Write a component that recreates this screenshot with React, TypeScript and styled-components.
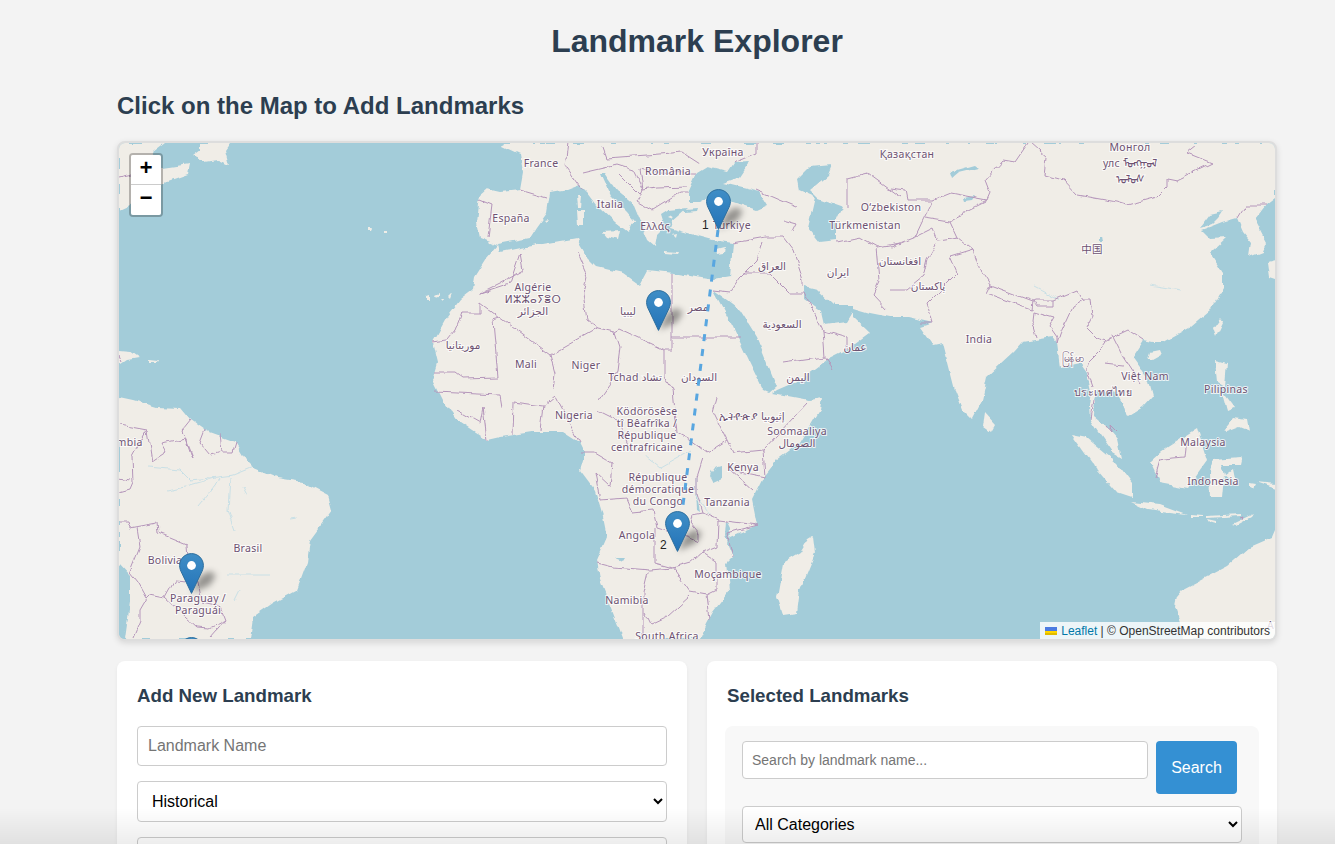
import styled, { createGlobalStyle } from 'styled-components';

const GlobalStyle = createGlobalStyle`
  html, body {
    margin: 0;
    height: 100%;
    overflow: hidden;
    background: #f3f3f3;
    font-family: "Liberation Sans", Arial, sans-serif;
  }
  * { box-sizing: border-box; }
`;

const Page = styled.div`
  width: 1160px;
  margin-left: 117px;
  padding-top: 21px;
`;

const Title = styled.h1`
  margin: 0 0 31px;
  font-size: 32px;
  line-height: 40px;
  font-weight: 700;
  text-align: center;
  color: #2c3e50;
`;

const SubTitle = styled.h2`
  margin: 0 0 21px;
  font-size: 24px;
  line-height: 28px;
  font-weight: 700;
  color: #2c3e50;
`;

const MapFrame = styled.div`
  position: relative;
  height: 500px;
  border: 2px solid #ddd;
  border-radius: 8px;
  overflow: hidden;
  background: #a3ccd9;
  box-shadow: 0 2px 6px rgba(0, 0, 0, 0.12);
`;

const MapSvg = styled.svg`
  display: block;
  width: 100%;
  height: 100%;
`;

const Land = styled.path`
  fill: #f0ede7;
`;

const Water = styled.path`
  fill: #a3ccd9;
`;

const Border = styled.path`
  fill: none;
  stroke: #b596bb;
  stroke-width: 1;
  stroke-linejoin: round;
`;

const River = styled.path`
  fill: none;
  stroke: #c9e0e6;
  stroke-width: 1;
  stroke-linejoin: round;
`;

const Route = styled.path`
  fill: none;
  stroke: #58a6e0;
  stroke-width: 3;
  stroke-dasharray: 7 8;
`;

const Label = styled.text`
  font-family: "Noto Sans", "DejaVu Sans", "Noto Sans CJK SC", sans-serif;
  font-size: 10.5px;
  letter-spacing: 0.3px;
  fill: #6d5272;
  text-anchor: middle;
  stroke: rgba(255, 255, 255, 0.75);
  stroke-width: 2px;
  paint-order: stroke;
`;

const ZoomControl = styled.div`
  position: absolute;
  left: 10px;
  top: 10px;
  border: 2px solid rgba(0, 0, 0, 0.25);
  border-radius: 4px;
  background-clip: padding-box;
`;

const ZoomButton = styled.a<{ $first?: boolean }>`
  display: block;
  width: 30px;
  height: 30px;
  background: #fff;
  color: #000;
  font: 700 22px/30px "Liberation Mono", "DejaVu Sans Mono", monospace;
  text-align: center;
  border-bottom: ${p => (p.$first ? '1px solid #ccc' : 'none')};
  border-radius: ${p => (p.$first ? '2px 2px 0 0' : '0 0 2px 2px')};
`;

const Attribution = styled.div`
  position: absolute;
  right: 0;
  bottom: 0;
  display: flex;
  align-items: center;
  height: 17px;
  padding: 0 5px;
  background: rgba(255, 255, 255, 0.8);
  font-size: 12px;
  color: #333;
  white-space: pre;
`;

const AttributionLink = styled.a`
  color: #0078a8;
`;

const Flag = styled.svg`
  width: 12px;
  height: 8px;
  margin-right: 4px;
`;

const Pin = styled.svg<{ $tipX: number; $tipY: number }>`
  position: absolute;
  left: ${p => p.$tipX - 119 - 12.5}px;
  top: ${p => p.$tipY - 143 - 41}px;
  width: 50px;
  height: 41px;
  overflow: visible;
`;

const PinNumber = styled.span<{ $x: number; $y: number }>`
  position: absolute;
  left: ${p => p.$x - 119}px;
  top: ${p => p.$y - 143}px;
  font-size: 12px;
  line-height: 14px;
  color: #222;
`;

const Columns = styled.div`
  display: grid;
  grid-template-columns: minmax(0, 1fr) minmax(0, 1fr);
  gap: 20px;
  margin-top: 20px;
`;

const Card = styled.section`
  background: #fff;
  border-radius: 8px;
  padding: 20px;
  box-shadow: 0 2px 4px rgba(0, 0, 0, 0.05);
  height: 400px;
`;

const CardTitle = styled.h3`
  margin: 4px 0 20px;
  font-size: 18.72px;
  line-height: 21px;
  font-weight: 700;
  color: #2c3e50;
`;

const Field = styled.input`
  display: block;
  width: 100%;
  height: 40px;
  margin-bottom: 15px;
  padding: 0 10px;
  border: 1px solid #ccc;
  border-radius: 4px;
  background: #fff;
  font: 16px "Liberation Sans", Arial, sans-serif;
  &::placeholder { color: #757575; }
`;

const Dropdown = styled.select<{ $height: number; $padding: number }>`
  display: block;
  width: 100%;
  height: ${p => p.$height}px;
  margin-bottom: 15px;
  padding: 0 ${p => p.$padding}px;
  border: 1px solid #ccc;
  border-radius: 4px;
  background: #fff;
  color: #000;
  font: 16px "Liberation Sans", Arial, sans-serif;
`;

const FilterPanel = styled.div`
  width: 534px;
  margin-left: -2px;
  padding: 15px 17px;
  background: #f8f8f8;
  border-radius: 8px;
`;

const SearchRow = styled.div`
  display: flex;
  align-items: flex-start;
  gap: 8px;
  margin-bottom: 12px;
`;

const SearchInput = styled.input`
  width: 406px;
  height: 38px;
  padding: 0 9px;
  border: 1px solid #ccc;
  border-radius: 4px;
  background: #fff;
  font: 14px "Liberation Sans", Arial, sans-serif;
  &::placeholder { color: #757575; }
`;

const SearchButton = styled.button`
  width: 81px;
  height: 53px;
  border: none;
  border-radius: 4px;
  background: #3490d3;
  color: #fff;
  font: 16px "Liberation Sans", Arial, sans-serif;
`;

const BottomFade = styled.div`
  position: fixed;
  left: 0;
  right: 0;
  bottom: 0;
  height: 36px;
  background: linear-gradient(to bottom, rgba(0, 0, 0, 0), rgba(0, 0, 0, 0.07));
  pointer-events: none;
`;

const lands = [
  // Eurasia and Africa
  'M505 143L1276 143L1276 198L1267 205L1255 220L1267 243L1263 252L1250 257L1252 243L1243 232L1237 218L1223 222L1213 226L1202 230L1210 238L1227 237L1210 253L1223 273L1223 287L1210 310L1190 327L1163 342L1153 342L1143 340L1132 357L1147 378L1152 397L1143 407L1127 417L1123 403L1117 393L1097 390L1094 400L1093 415L1105 425L1118 440L1122 458L1112 452L1100 435L1090 420L1089 405L1091 392L1087 373L1080 363L1060 367L1057 343L1053 337L1023 342L1013 353L987 377L982 400L972 419L963 410L955 390L943 343L933 345L920 327L933 323L907 317L890 317L870 313L853 308L853 317L870 333L847 350L827 360L800 380L777 390L773 393L810 400L822 398L820 410L800 443L777 460L763 478L752 500L757 525L730 537L727 543L733 557L727 563L730 590L713 612L707 623L700 639L623 639L613 613L600 580L597 560L607 537L603 517L595 490L580 470L585 453L580 443L563 432L533 432L500 437L487 440L457 420L443 400L433 380L438 363L433 342L447 317L460 300L473 290L475 277L487 258L498 245L480 238L477 223L480 195L487 189L500 192L520 190L523 173L520 155L503 147Z',
  // South America
  'M119 397L133 400L157 407L180 408L190 420L207 432L235 442L247 462L253 468L277 478L303 482L328 495L332 510L310 540L307 563L297 590L273 603L253 617L250 639L125 639L130 603L130 575L119 563Z',
  // North America corner
  'M119 143L165 143L152 153L162 168L190 164L188 174L165 182L150 190L130 205L119 210Z',
  'M200 143L230 143L225 150L229 165L218 160L205 162L192 156L200 150Z',
  // Caribbean
  'M119 350L130 351L140 358L128 360L122 364L119 362Z',
  'M148 359L157 360L156 362L148 362Z',
  // Madagascar
  'M813 537L815 553L800 590L797 613L783 615L777 597L783 563L800 553L808 540Z',
  // Sri Lanka
  'M985 412L995 423L990 432L983 427Z',
  // Sumatra, Java, Sunda islands
  'M1072 435L1087 438L1117 463L1132 483L1132 498L1117 493L1097 470Z',
  'M1130 502L1160 505L1187 515L1170 513L1147 510Z',
  'M1191 514L1203 515L1203 517L1191 517Z',
  'M1207 516L1240 514L1240 516L1207 518Z',
  'M1208 519L1217 521L1217 524L1210 522Z',
  'M1232 524L1253 514L1251 517L1236 525Z',
  // Borneo, Sulawesi
  'M1150 462L1163 450L1183 437L1197 428L1207 460L1187 488L1160 483Z',
  'M1213 460L1240 458L1242 456L1240 465L1222 465L1225 475L1232 470L1235 485L1224 476L1222 497L1211 497L1210 472Z',
  // Philippines
  'M1215 360L1227 363L1225 387L1217 382Z',
  'M1223 392L1235 408L1228 411Z',
  'M1223 430L1234 417L1248 419L1250 431L1240 427L1227 432Z',
  // Papua bits
  'M1250 483L1256 484L1254 488L1250 487Z',
  'M1256 482L1276 484L1276 489L1262 484Z',
  // Australia
  'M1177 597L1183 590L1227 567L1250 547L1273 537L1276 530L1276 639L1182 639L1180 622L1175 607Z',
  // Taiwan, Hainan, Japan
  'M1220 318L1223 322L1216 337L1213 328Z',
  'M1150 352L1160 350L1162 355L1153 360L1148 358Z',
  'M1268 262L1276 260L1276 278L1270 276Z',
  // Atlantic islands
  'M427 297L430 296L430 300L427 300Z',
  'M435 296L439 294L439 297L436 298Z',
  'M448 296L452 292L450 298Z',
  'M441 299L444 299L443 301Z',
  'M367 228L372 228L371 230L367 230Z',
  'M383 232L387 232L387 234L383 234Z',
];

const seas = [
  // Mediterranean
  'M498 244L530 238L537 227L547 213L550 193L567 190L580 185L588 193L597 205L615 222L628 232L632 222L641 222L648 240L655 246L657 235L664 228L660 215L668 210L688 208L672 222L670 228L687 233L713 240L733 243L730 277L713 280L673 273L648 270L640 285L623 273L597 267L588 258L580 245L577 238L520 248L500 252Z',
  // Adriatic
  'M600 173L604 173L616 190L634 205L641 222L637 224L627 212L610 195Z',
  // Black Sea
  'M688 193L697 173L707 167L727 172L733 163L750 162L740 177L723 183L760 192L768 205L757 210L733 202L717 193L700 202L688 202Z',
  // Marmara
  'M685 210L697 209L696 212L685 213Z',
  // Caspian
  'M797 180L810 167L832 165L828 175L810 190L818 198L843 207L837 220L837 240L820 242L808 227L815 197L799 190Z',
  // Red Sea
  'M713 290L727 300L740 310L757 337L777 387L770 393L763 390L747 357L733 327Z',
  // Persian Gulf
  'M805 287L817 290L833 305L853 305L853 312L847 322L825 325L822 312L805 300Z',
  // Bohai and lakes
  'M1200 228L1210 215L1223 212L1219 218L1213 224Z',
  'M950 172L975 165L979 168L958 173L952 178Z',
  'M963 198L975 196L972 200L964 201Z',
  'M1100 237L1103 236L1104 242L1100 242Z',
  // African lakes
  'M712 468L722 465L722 478L713 482L710 476Z',
  'M696 492L700 512L697 510Z',
  'M726 520L730 528L729 545L725 535Z',
  'M615 557L624 557L622 560Z',
];

const islands = [
  // Mediterranean islands sit over the sea polygons
  'M577 197L581 197L580 207L578 207Z',
  'M577 209L584 209L584 225L578 225Z',
  'M602 232L620 231L618 240L606 237Z',
  'M664 251L678 252L677 254L664 253Z',
  'M716 249L724 247L723 254L717 255Z',
  'M545 220L549 219L547 222Z',
  'M668 218L672 216L673 220Z',
  'M678 226L682 224L681 228Z',
  'M672 235L676 234L675 238Z',
  'M710 468L717 466L713 472Z',
];

const borders = [
  // North and Sahara Africa
  'M672 273L672 337L672 350L665 350L620 329L615 332L598 328L550 355L500 318L480 303L480 313L462 313L455 330L447 340L433 342',
  'M672 337L740 337',
  'M577 253L587 276L583 293L587 320L598 328',
  'M500 318L493 320L498 377L463 378L455 372L435 372',
  'M480 293L510 283L520 253L523 270L500 283L480 293',
  'M550 355L555 373L553 390',
  'M615 332L620 347L617 370L610 383L598 400',
  'M665 350L665 377L673 390L677 433L690 440L707 453L727 440L733 453L763 450L808 402',
  'M717 397L713 412L727 440',
  'M763 450L765 477L730 470L753 490',
  'M600 500L627 498L633 512L653 510L657 528L687 537L698 542L698 533L690 523L692 515L703 513L697 493L697 477L703 458',
  'M597 563L613 567L650 570L673 568L655 563L655 528',
  'M673 568L690 563L702 553L717 547L718 520L703 513',
  'M718 520L758 525L727 533L733 557',
  'M702 553L717 563L717 590L707 595L710 620',
  'M643 593L648 572M643 593L643 638',
  'M673 568L690 592L707 595M690 596L667 617L650 625L644 613',
  'M580 453L595 453L612 463L610 487L595 473L600 500',
  'M512 435L513 403L543 407L555 397L580 443',
  'M457 410L480 423L483 407L487 440M435 392L500 395L502 407M540 430L543 407',
  'M597 410L617 420L630 450',
  // Middle East and Caucasus
  'M733 243L767 237L783 237L793 250L803 280L803 287',
  'M763 242L757 260L740 277L730 292M743 273L770 273L790 293L805 293',
  'M730 292L713 290M823 330L847 337L847 350M825 357L833 370M783 363L825 357L823 330L805 293',
  'M757 190L780 200L797 207M783 220L797 224L793 232',
  'M848 207L848 178L867 173L900 197M837 242L860 237L878 247L900 243',
  'M877 248L880 280L873 295L887 310',
  // Central and South Asia
  'M1028 143L1015 162L1003 160L985 180L990 193L987 200L967 210L963 215L950 222L957 237L973 250L980 270L990 285L1033 301L1032 310L986 293L990 285',
  'M890 188L905 190L907 200L933 200L950 193L987 200',
  'M933 200L923 220L915 237L933 228L938 240L957 237M890 247L915 237M925 218L950 222',
  'M973 250L950 257L957 273L927 303L933 323L920 323',
  'M937 242L927 260L923 277L907 290L890 290',
  'M1030 143L1047 158L1045 175L1063 180L1077 195L1117 202L1127 205L1157 197L1167 187L1167 178L1177 180L1212 163L1187 153L1197 145',
  'M1033 301L1035 300L1053 300L1053 307L1037 307L1033 301M1053 300L1077 290L1083 300L1090 300L1092 317L1087 327L1097 337L1107 340L1128 330L1143 340',
  'M1033 312L1055 318L1050 327L1057 337L1057 343M1037 337L1032 320L1033 312',
  'M1083 300L1072 307L1060 333L1057 343',
  'M1107 340L1100 350L1090 360L1087 370L1093 387M1112 335L1123 357L1140 383M1105 363L1123 365',
  'M1093 400L1090 418M1105 425L1111 432L1110 425L1117 432',
  'M1155 478L1160 460L1172 458L1185 457L1187 438',
  'M1240 518L1243 517L1242 520',
  'M1237 218L1245 205L1267 205',
  // Europe
  'M568 143L565 165L583 190',
  'M520 190L547 198',
  'M480 200L492 205L488 237',
  'M583 173L617 165L633 170L643 190',
  'M603 147L607 158L647 155L683 152L700 163',
  'M757 143L757 153L733 163',
  'M657 172L687 173L697 173M657 188L687 187M657 172L640 168L643 190L637 201L653 210L680 193',
  'M620 175L640 195M643 190L657 188M680 193L688 193',
  // South America
  'M132 457L147 430L120 425M147 430L152 462L167 452L162 443L185 438L190 453L193 458L182 430L190 420',
  'M205 430L200 443L210 455L222 452L220 433M222 453L233 453L236 443',
  'M132 457L133 483L130 490L119 493M119 478L130 480',
  'M119 522L128 522L130 528L157 523L158 533L187 545L188 557L198 582L202 603L220 607L225 620L210 637',
  'M137 528L140 547L130 572L138 582L147 598L140 610L140 620L133 637',
  'M147 598L150 595L165 598L175 580L198 582',
  'M197 627L210 628L225 620M165 598L197 627',
  // North America
  'M119 178L132 175',
  'M119 355L122 362',
];

const rivers = [
  'M148 467L180 470L190 480L210 478L233 475L253 467',
  'M168 490L190 485L215 478M198 506L215 485L220 478',
  'M230 478L228 510L235 530M243 487L247 495',
  'M228 575L243 575L270 575M240 590L235 600M290 520L297 519',
  'M645 455L660 467L690 450',
  'M697 477L697 497L710 515',
  'M1035 287L1060 300M1150 285L1180 290',
];

const places: [string, number, number][] = [
  ['France', 541, 167],
  ['Україна', 723, 156],
  ['Қазақстан', 907, 158],
  ['România', 668, 175],
  ['Italia', 610, 208],
  ['España', 511, 222],
  ['Ελλάς', 655, 230],
  ['Türkiye', 732, 229],
  ['O‘zbekiston', 891, 211],
  ['Türkmenistan', 865, 229],
  ['Монгол', 1130, 151],
  ['улс ᠮᠤᠩᠭᠤᠯ', 1130, 167],
  ['ᠤᠯᠤᠰ', 1130, 183],
  ['中国', 1092, 253],
  ['Algérie', 533, 291],
  ['ⵍⵣⵣⴰⵢⴻⵔ', 533, 303],
  ['الجزائر', 533, 315],
  ['ليبيا', 628, 315],
  ['مصر', 698, 311],
  ['العراق', 772, 270],
  ['ایران', 838, 276],
  ['افغانستان', 900, 265],
  ['پاکستان', 928, 290],
  ['السعودية', 782, 328],
  ['عمان', 855, 351],
  ['اليمن', 798, 381],
  ['موريتانيا', 463, 349],
  ['Mali', 526, 368],
  ['Niger', 586, 369],
  ['Tchad تشاد', 635, 381],
  ['السودان', 699, 381],
  ['India', 979, 343],
  ['မြန်မာ', 1073, 362],
  ['Việt Nam', 1145, 380],
  ['Pilipinas', 1226, 393],
  ['ประเทศไทย', 1103, 396],
  ['Malaysia', 1203, 446],
  ['Indonesia', 1213, 485],
  ['Nigeria', 574, 419],
  ['Ködörösêse', 647, 415],
  ['tî Bêafrîka /', 647, 427],
  ['République', 647, 439],
  ['centrafricaine', 647, 451],
  ['ኢትዮጵያ إثيوبيا', 752, 420],
  ['Soomaaliya', 797, 435],
  ['الصومال', 797, 447],
  ['Kenya', 743, 471],
  ['République', 658, 481],
  ['démocratique', 658, 493],
  ['du Congo', 658, 505],
  ['Tanzania', 727, 506],
  ['Angola', 637, 539],
  ['Moçambique', 728, 578],
  ['Namibia', 627, 604],
  ['South Africa', 667, 640],
  ['Colombia', 118, 446],
  ['Bolivia', 165, 564],
  ['Brasil', 248, 552],
  ['Paraguay /', 198, 602],
  ['Paraguái', 198, 614],
  ['Australia', 1290, 629],
];

const pins = [
  { x: 718, y: 230 },
  { x: 658, y: 331 },
  { x: 677, y: 552 },
  { x: 191, y: 594 },
  { x: 191, y: 678 },
];

const PinShape = ({ x, y }: { x: number; y: number }) => (
  <Pin $tipX={x} $tipY={y} viewBox="0 0 50 41">
    <defs>
      <linearGradient id="pinFill" x1="0" y1="0" x2="0" y2="1">
        <stop offset="0" stopColor="#3f8ec6" />
        <stop offset="1" stopColor="#2473b8" />
      </linearGradient>
      <filter id="pinShadow" x="-60%" y="-60%" width="220%" height="220%">
        <feGaussianBlur stdDeviation="3" />
      </filter>
    </defs>
    <path d="M13 40L20 24L30 18L37 22L31 32Z" fill="rgba(0,0,0,0.38)" filter="url(#pinShadow)" />
    <path
      d="M12.5 .6C5.9 .6 .6 5.9 .6 12.5C.6 15 1.4 17.4 2.8 20L12.5 40.4L22.2 20C23.6 17.4 24.4 15 24.4 12.5C24.4 5.9 19.1 .6 12.5 .6Z"
      fill="url(#pinFill)"
      stroke="#2e6f9e"
      strokeWidth="1"
    />
    <circle cx="12.5" cy="12.5" r="4.4" fill="#fff" />
  </Pin>
);

export default function App() {
  return (
    <>
      <GlobalStyle />
      <Page>
        <Title>Landmark Explorer</Title>
        <SubTitle>Click on the Map to Add Landmarks</SubTitle>
        <MapFrame>
          <MapSvg viewBox="119 143 1156 496" preserveAspectRatio="none">
            <defs>
              {/* roughens the hand-plotted coastlines so they read as a tile map */}
              <filter id="coast" x="0" y="0" width="100%" height="100%">
                <feTurbulence type="fractalNoise" baseFrequency="0.07" numOctaves="3" seed="4" result="noise" />
                <feDisplacementMap in="SourceGraphic" in2="noise" scale="6" xChannelSelector="R" yChannelSelector="G" />
                <feGaussianBlur stdDeviation="0.35" />
              </filter>
            </defs>
            <g filter="url(#coast)">
              <rect x="109" y="133" width="1176" height="516" fill="#a3ccd9" />
              {lands.map(d => <Land key={d} d={d} />)}
              {seas.map(d => <Water key={d} d={d} />)}
              {islands.map(d => <Land key={d} d={d} />)}
              {rivers.map(d => <River key={d} d={d} />)}
              {borders.map(d => <Border key={d} d={d} />)}
            </g>
            {places.map(([name, x, y]) => (
              <Label key={`${name}${x}`} x={x} y={y}>{name}</Label>
            ))}
            <Route d="M718 230L677 552" />
          </MapSvg>
          {pins.map(p => <PinShape key={p.y} x={p.x} y={p.y} />)}
          <PinNumber $x={702} $y={218}>1</PinNumber>
          <PinNumber $x={660} $y={538}>2</PinNumber>
          <ZoomControl>
            <ZoomButton $first>+</ZoomButton>
            <ZoomButton>−</ZoomButton>
          </ZoomControl>
          <Attribution>
            <Flag viewBox="0 0 12 8">
              <rect width="12" height="4" fill="#4c7be1" />
              <rect y="4" width="12" height="2" fill="#ffd500" />
              <rect y="6" width="12" height="2" fill="#e0bc00" />
            </Flag>
            <AttributionLink>Leaflet</AttributionLink>
            {' | © OpenStreetMap contributors'}
          </Attribution>
        </MapFrame>
        <Columns>
          <Card>
            <CardTitle>Add New Landmark</CardTitle>
            <Field placeholder="Landmark Name" />
            <Dropdown $height={41} $padding={10}>
              <option>Historical</option>
            </Dropdown>
            <Field />
          </Card>
          <Card>
            <CardTitle>Selected Landmarks</CardTitle>
            <FilterPanel>
              <SearchRow>
                <SearchInput placeholder="Search by landmark name..." />
                <SearchButton>Search</SearchButton>
              </SearchRow>
              <Dropdown $height={37} $padding={8}>
                <option>All Categories</option>
              </Dropdown>
            </FilterPanel>
          </Card>
        </Columns>
      </Page>
      <BottomFade />
    </>
  );
}
